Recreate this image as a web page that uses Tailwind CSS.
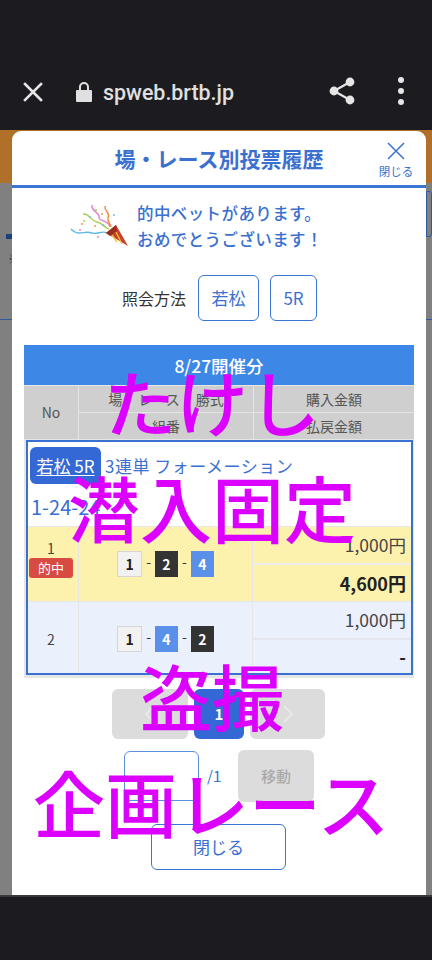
<!DOCTYPE html>
<html lang="ja"><head><meta charset="utf-8">
<script src="https://cdn.jsdelivr.net/npm/@tailwindcss/browser@4"></script>
</head>
<body class="m-0 overflow-hidden">
<div class="relative w-[432px] h-[960px] flex flex-col bg-[#808080] overflow-hidden font-['Noto_Sans_CJK_JP','Noto_Sans',sans-serif]">
  <!-- browser bar -->
  <div class="h-[130px] shrink-0 bg-[#1c1c20] pt-[60px] relative">
    <div class="flex items-center h-[64px] pl-[22px] pr-[28px]">
      <svg class="w-[22px] h-[22px]" viewBox="0 0 22 22"><path d="M3 3 L19 19 M19 3 L3 19" stroke="#e6e6e6" stroke-width="2.6" stroke-linecap="square"/></svg>
      <svg class="w-[16px] h-[20px] ml-[32px]" viewBox="0 0 16 20"><path d="M1 8h14a1 1 0 0 1 1 1v10a1 1 0 0 1-1 1H1a1 1 0 0 1-1-1V9a1 1 0 0 1 1-1z" fill="#e0e0e0"/><path d="M4 8V5a4 4 0 0 1 8 0v3" fill="none" stroke="#e0e0e0" stroke-width="2"/></svg>
      <span class="ml-[11px] mt-[1px] text-[21.4px] font-medium text-[#e0e0e0] font-['Roboto',sans-serif] leading-none">spweb.brtb.jp</span>
      <svg class="w-[26px] h-[28px] ml-auto -mt-[2px]" viewBox="0 0 26 28"><circle cx="21" cy="5" r="4.4" fill="#e6e6e6"/><circle cx="21" cy="23" r="4.4" fill="#e6e6e6"/><circle cx="5" cy="14" r="4.4" fill="#e6e6e6"/><path d="M21 5 L5 14 L21 23" fill="none" stroke="#e6e6e6" stroke-width="2.2"/></svg>
      <div class="ml-[43px] -mt-[2px] flex flex-col gap-[5px]"><span class="w-[6px] h-[6px] rounded-full bg-[#e6e6e6]"></span><span class="w-[6px] h-[6px] rounded-full bg-[#e6e6e6]"></span><span class="w-[6px] h-[6px] rounded-full bg-[#e6e6e6]"></span></div>
    </div>
  </div>

  <!-- dimmed page behind the modal -->
  <div class="absolute left-0 right-0 top-[130px] h-[53px] bg-[#b0702a]"></div>
  <div class="absolute left-[6px] top-[234px] w-[6px] h-[5px] bg-[#1d3f7d]"></div>
  <div class="absolute left-[8px] top-[253px] text-[12px] leading-none text-[#333]">※</div>
  <div class="absolute left-0 top-[319px] w-[12px] h-[1px] bg-[#2f5a9e]"></div>
  <div class="absolute right-0 top-[191px] w-[6px] h-[46px] border border-[#2f5a9e] rounded-r-[3px]"></div>
  <div class="absolute right-0 top-[319px] w-[6px] h-[1px] bg-[#2f5a9e]"></div>

  <!-- modal -->
  <div class="relative ml-[12px] mt-[1px] w-[414px] h-[764px] shrink-0 bg-white rounded-t-[9px] flex flex-col">
    <div class="relative h-[54px] shrink-0 border-b-[3px] border-[#3a75d6] box-content">
      <div class="pt-[13px] text-center text-[21px] leading-[28px] font-bold text-[#3a70d0]">場・レース別投票履歴</div>
      <div class="absolute right-[13px] top-[10px] w-[34px] flex flex-col items-center">
        <svg class="w-[20px] h-[20px]" viewBox="0 0 20 20"><path d="M2 2 L18 18 M18 2 L2 18" stroke="#3a70d0" stroke-width="1.5"/></svg>
        <span class="text-[11.5px] leading-[14px] mt-[3px] text-[#3a70d0] whitespace-nowrap">閉じる</span>
      </div>
    </div>

    <div class="flex items-center pl-[58px] mt-[12px] h-[52px]">
      <svg class="w-[60px] h-[44px] shrink-0" viewBox="0 0 60 44">
        <path d="M1 25 C8 33 14 26 22 29 C28 31 31 26 37 29" fill="none" stroke="#5db7ea" stroke-width="1.4"/>
        <path d="M13 10 C20 9 20 17 27 18 C33 19 33 23 39 25" fill="none" stroke="#a9cf55" stroke-width="1.4"/>
        <path d="M22 1 C21 8 30 8 29 13 C28 18 38 15 40 23" fill="none" stroke="#e37cc0" stroke-width="1.4"/>
        <path d="M35 2 C34 8 41 8 38 14 C37 18 41 20 41 23" fill="none" stroke="#ef8a3d" stroke-width="1.4"/>
        <path d="M36 29 L46 21 L58 42 Z" fill="#c9402a"/>
        <path d="M36 29 L46 21 L47 27 L40 32 Z" fill="#9b2c1e"/>
        <path d="M46 28 L52 40 M42 31 L47 38" stroke="#f0c23c" stroke-width="1.3"/>
        <g fill="#f29a4a"><circle cx="12" cy="20" r="1"/><circle cx="32" cy="10" r="1"/><circle cx="25" cy="22" r="1"/></g>
        <g fill="#6cc0ea"><circle cx="20" cy="13" r="1"/><circle cx="44" cy="11" r="1"/><circle cx="33" cy="21" r="1"/></g>
        <g fill="#e88ac4"><circle cx="10" cy="26" r="1"/><circle cx="28" cy="33" r="1"/></g>
        <g fill="#a9cf55"><circle cx="14" cy="17" r="1"/><circle cx="26" cy="6" r="1"/></g>
      </svg>
      <div class="ml-[7px] text-[16.5px] leading-[26px] font-medium text-[#3a70d0] tracking-[0.4px] whitespace-nowrap">的中ベットがあります。<br>おめでとうございます！</div>
    </div>

    <div class="flex items-center mt-[23px] pl-[110px] h-[46px]">
      <span class="text-[16px] text-[#333] w-[64px] whitespace-nowrap">照会方法</span>
      <span class="ml-[12px] w-[61px] h-[46px] flex items-center justify-center border border-[#3a75d6] rounded-[6px] text-[17px] text-[#3a70d0]">若松</span>
      <span class="ml-[11px] w-[47px] h-[46px] flex items-center justify-center border border-[#3a75d6] rounded-[6px] text-[17px] text-[#3a70d0]">5R</span>
    </div>

    <!-- table -->
    <div class="ml-[12px] mt-[24px] w-[390px] bg-[#e6e6e6] pb-[3px]">
      <div class="h-[40px] bg-[#3d88e6] text-white text-[17.5px] font-medium flex items-center justify-center pt-[2px]">8/27開催分</div>
      <div class="mt-[1px] grid grid-cols-[54px_174px_1fr] grid-rows-[26px_26px] h-[53px] gap-[1px] bg-[#e4e4e4] text-[14px] text-[#555]">
        <div class="row-span-2 bg-[#cfcfcf] flex items-center justify-center">No</div>
        <div class="bg-[#cfcfcf] flex items-center justify-center gap-[16px]"><span>場</span><span>レース</span><span>勝式</span></div>
        <div class="bg-[#cfcfcf] flex items-center justify-center">購入金額</div>
        <div class="bg-[#cfcfcf] flex items-center justify-center">組番</div>
        <div class="bg-[#cfcfcf] flex items-center justify-center">払戻金額</div>
      </div>
      <div class="ml-[2px] mr-[1px] mt-[1px] border-2 border-[#3a70d0] bg-white">
        <div class="h-[84px] relative">
          <div class="flex items-start pl-[2px] pt-[5px]">
            <span class="w-[71px] h-[37px] bg-[#3468d4] rounded-[6px] text-white text-[17px] flex items-center justify-center whitespace-nowrap"><span class="underline underline-offset-2">若松 5R</span></span>
            <span class="ml-[4px] mt-[7px] text-[17px] leading-[24px] text-[#3a70d0] tracking-[0.5px] whitespace-nowrap">3連単 フォーメーション</span>
          </div>
          <div class="pl-[3px] mt-[11px] text-[20px] leading-[24px] text-[#3a70d0]">1-24-24</div>
        </div>
        <div class="grid grid-cols-[51px_174px_1fr] h-[75px] bg-[#fdf1ae] border-t border-[#e6e6e6]">
          <div class="flex flex-col items-center pt-[11px] pr-[4px] border-r border-[#e6e6e6]">
            <span class="text-[14px] leading-[20px] text-[#444]">1</span>
            <span class="w-[44px] h-[20px] bg-[#d84b42] rounded-[3px] text-white text-[13px] flex items-center justify-center shrink-0">的中</span>
          </div>
          <div class="flex items-start justify-center gap-[4px] pt-[24px] border-r border-[#e6e6e6] text-[14px] text-[#333]">
            <span class="w-[25px] h-[26px] bg-[#f2f2f2] border border-[#d6d6d6] flex items-center justify-center font-bold text-[#222]">1</span><span>-</span>
            <span class="w-[23px] h-[26px] bg-[#333] flex items-center justify-center font-bold text-white">2</span><span>-</span>
            <span class="w-[23px] h-[26px] bg-[#5a90ea] flex items-center justify-center font-bold text-white">4</span>
          </div>
          <div class="flex flex-col">
            <div class="h-[38px] border-b-2 border-[#ececec] flex items-center justify-end pr-[5px] text-[17.5px] text-[#444]">1,000円</div>
            <div class="flex-1 flex items-center justify-end pr-[5px] text-[18px] font-bold text-[#222]">4,600円</div>
          </div>
        </div>
        <div class="grid grid-cols-[51px_174px_1fr] h-[72px] bg-[#eaf1fd] border-t border-[#e6e6e6]">
          <div class="flex items-center justify-center border-r border-[#e6e6e6] text-[14px] text-[#444] pt-[4px] pr-[4px]">2</div>
          <div class="flex items-start justify-center gap-[4px] pt-[24px] border-r border-[#e6e6e6] text-[14px] text-[#333]">
            <span class="w-[25px] h-[26px] bg-[#f2f2f2] border border-[#d6d6d6] flex items-center justify-center font-bold text-[#222]">1</span><span>-</span>
            <span class="w-[23px] h-[26px] bg-[#5a90ea] flex items-center justify-center font-bold text-white">4</span><span>-</span>
            <span class="w-[23px] h-[26px] bg-[#333] flex items-center justify-center font-bold text-white">2</span>
          </div>
          <div class="flex flex-col">
            <div class="h-[38px] border-b-2 border-[#e3e6ee] flex items-center justify-end pr-[5px] text-[17.5px] text-[#444]">1,000円</div>
            <div class="flex-1 flex items-center justify-end pr-[5px] text-[18px] font-bold text-[#222]">-</div>
          </div>
        </div>
      </div>
    </div>

    <!-- pagination -->
    <div class="flex mt-[11px] ml-[100px] gap-[6px] h-[50px]">
      <div class="w-[76px] bg-[#dcdcdc] rounded-[6px] flex items-center justify-center"><svg class="w-[10px] h-[18px]" viewBox="0 0 10 18"><path d="M9 1 L1 9 L9 17" fill="none" stroke="#ececec" stroke-width="1.5"/></svg></div>
      <div class="w-[50px] bg-[#3468d4] rounded-[6px] flex items-center justify-center text-white text-[15px] font-bold">1</div>
      <div class="w-[75px] bg-[#dcdcdc] rounded-[6px] flex items-center justify-center"><svg class="w-[10px] h-[18px]" viewBox="0 0 10 18"><path d="M1 1 L9 9 L1 17" fill="none" stroke="#ececec" stroke-width="1.5"/></svg></div>
    </div>
    <div class="flex items-center mt-[11px] ml-[112px] h-[52px]">
      <div class="w-[75px] h-[50px] border border-[#5c8fdf] rounded-[6px]"></div>
      <span class="ml-[8px] text-[15px] text-[#3a70d0] w-[31px]">/1</span>
      <div class="w-[76px] h-[52px] bg-[#dcdcdc] rounded-[6px] flex items-center justify-center text-[15px] font-medium text-[#aaa]">移動</div>
    </div>
    <div class="ml-[139px] mt-[22px] w-[135px] h-[46px] border border-[#3a75d6] rounded-[6px] flex items-center justify-center text-[17px] text-[#3a70d0]">閉じる</div>
  </div>
  <div class="flex-1 bg-[#1c1c20] border-t-2 border-[#38383c]"></div>

  <!-- magenta caption overlay -->
  <div class="absolute left-[104px] top-[356px] text-[72px] leading-[88px] text-[#dc00ff] font-medium whitespace-nowrap">たけし</div>
  <div class="absolute left-[68px] top-[461px] text-[72px] leading-[90px] text-[#dc00ff] font-medium whitespace-nowrap">潜入固定</div>
  <div class="absolute left-[140px] top-[654px] text-[72px] leading-[80px] text-[#dc00ff] font-medium whitespace-nowrap">盗撮</div>
  <div class="absolute left-[33px] top-[756px] text-[72px] leading-[90px] text-[#dc00ff] font-medium whitespace-nowrap">企画レース</div>
</div>
</body></html>
